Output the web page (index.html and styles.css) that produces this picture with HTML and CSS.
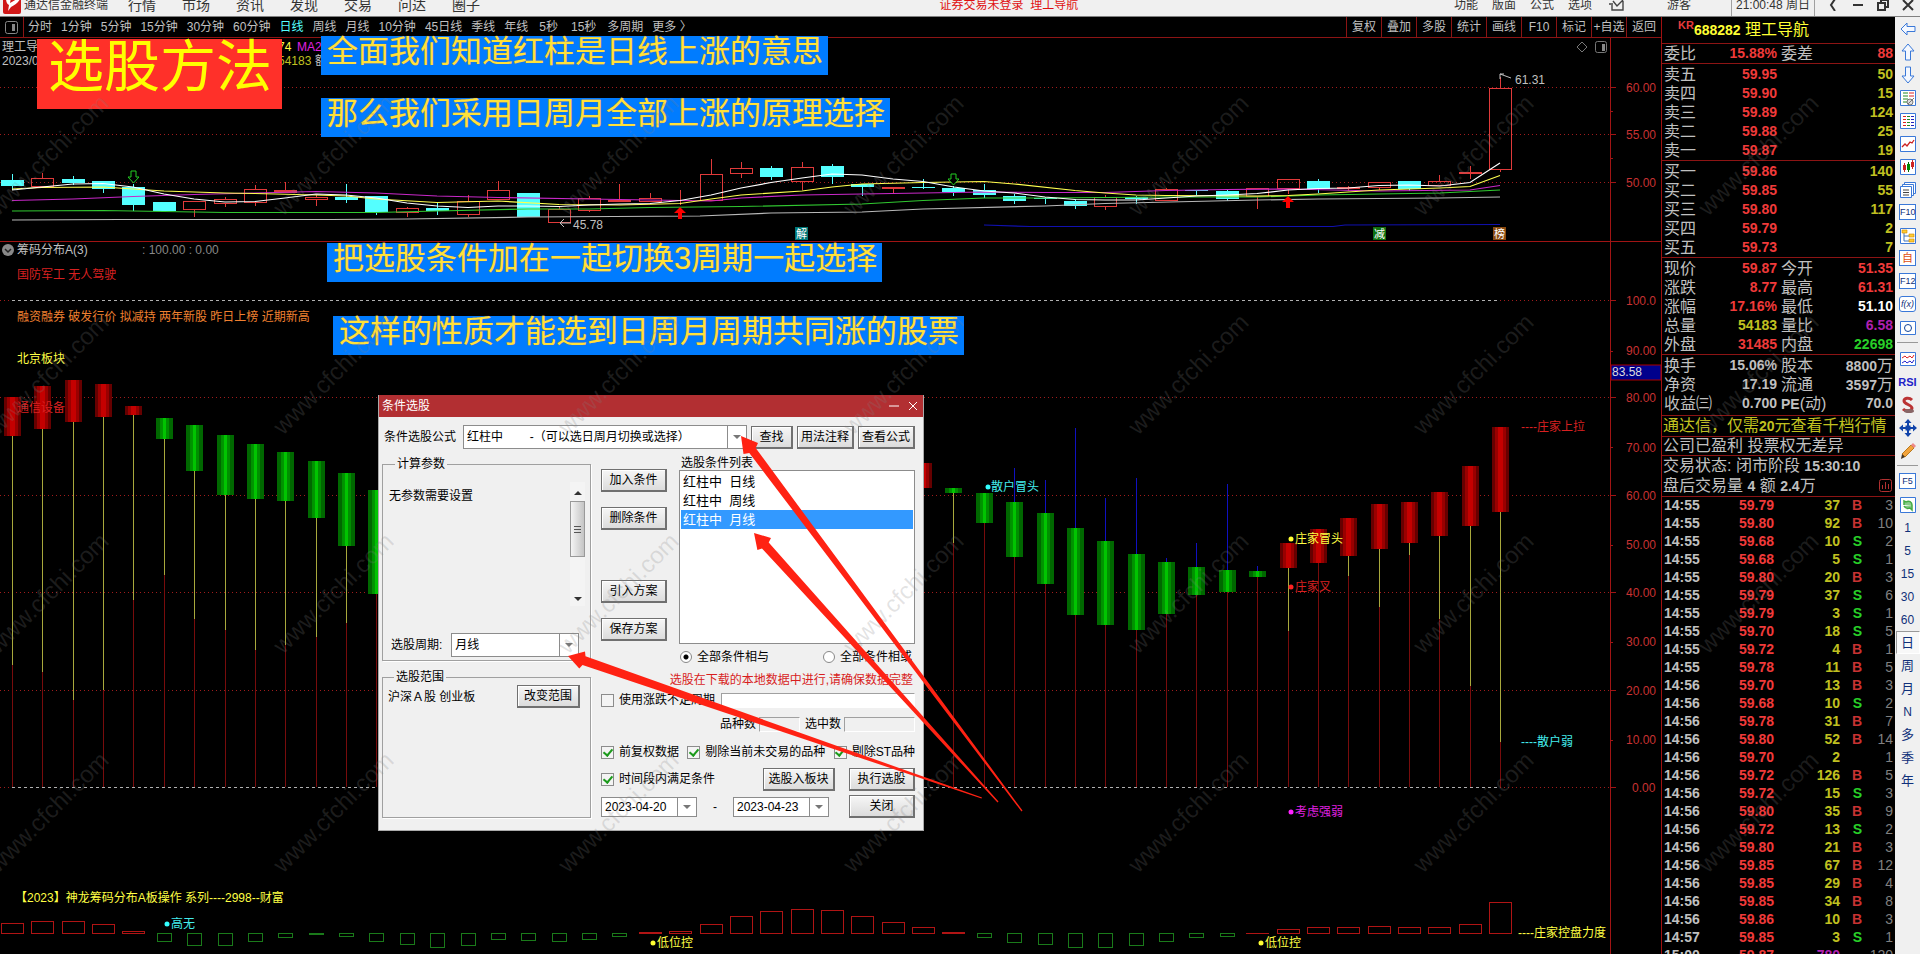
FILE: index.html
```html
<!DOCTYPE html>
<html lang="zh-CN">
<head>
<meta charset="utf-8">
<title>通达信金融终端</title>
<link rel="stylesheet" href="styles.css">
</head>
<body>
<header class="titlebar">
  <svg class="logo" width="18" height="18" viewBox="0 0 18 18"><rect width="18" height="18" rx="2" fill="#d01818"/><path d="M3 2h5l-1 5 7-4h3c-2 4-5 6-9 8l-3 4 1-6C4 8 3 6 3 2z" fill="#fff"/></svg>
  <span class="app-name">通达信金融终端</span>
  <nav class="menu"><a href="#">行情</a><a href="#">市场</a><a href="#">资讯</a><a href="#">发现</a><a href="#">交易</a><a href="#">问达</a><a href="#">圈子</a></nav>
  <p class="login">证券交易未登录&nbsp; 理工导航</p>
  <nav class="submenu"><a href="#">功能</a><a href="#">版面</a><a href="#">公式</a><a href="#">选项</a></nav>
  <svg class="mail" width="16" height="12" viewBox="0 0 16 12" fill="none" stroke="#444" stroke-width="1.4"><path d="M3 6v5h11V2M0 5h4M4 2l4 5 6-6"/></svg>
  <span class="guest">游客</span>
  <span class="clock">21:00:48 周日</span>
  <div class="winctl">
    <button aria-label="后退"><svg width="12" height="12" viewBox="0 0 12 12"><path d="M8 0 4 6l4 6"/></svg></button>
    <button aria-label="最小化"><svg width="12" height="12" viewBox="0 0 12 12"><path d="M1 6h10"/></svg></button>
    <button aria-label="还原"><svg width="12" height="12" viewBox="0 0 12 12"><path d="M4 3V1h7v7H9M1 4h7v7H1z"/></svg></button>
    <button aria-label="关闭"><svg width="12" height="12" viewBox="0 0 12 12"><path d="m1 1 10 10M11 1 1 11"/></svg></button>
  </div>
</header>

<div class="main">
  <main class="workspace">
    <div class="toolbar">
      <button class="pane" aria-label="面板"><svg width="13" height="13" viewBox="0 0 13 13"><rect x=".5" y=".5" width="12" height="12" rx="2" fill="none" stroke="#888"/><path d="M7 3h3v7H7z" fill="#888"/></svg></button>
      <div class="periods"><button>分时</button><button>1分钟</button><button>5分钟</button><button>15分钟</button><button>30分钟</button><button>60分钟</button><button class="active">日线</button><button>周线</button><button>月线</button><button>10分钟</button><button>45日线</button><button>季线</button><button>年线</button><button class="sec">5秒</button><button class="sec">15秒</button><button>多周期</button><button>更多 〉</button></div>
      <div class="actions"><button>复权</button><button>叠加</button><button>多股</button><button>统计</button><button>画线</button><button>F10</button><button>标记</button><button>+自选</button><button>返回</button></div>
    </div>

    <div class="stage">
      <svg class="chart" viewBox="0 38 1661 916" preserveAspectRatio="xMinYMin meet">
        <defs>
          <linearGradient id="up">
            <stop offset="0" stop-color="#600"/><stop offset=".18" stop-color="#600"/><stop offset=".18" stop-color="#900"/><stop offset=".36" stop-color="#900"/><stop offset=".36" stop-color="#c40000"/><stop offset=".64" stop-color="#c40000"/><stop offset=".64" stop-color="#900"/><stop offset=".82" stop-color="#900"/><stop offset=".82" stop-color="#600"/><stop offset="1" stop-color="#600"/>
          </linearGradient>
          <linearGradient id="down">
            <stop offset="0" stop-color="#006800"/><stop offset=".22" stop-color="#006800"/><stop offset=".22" stop-color="#008e00"/><stop offset=".4" stop-color="#009600"/><stop offset=".4" stop-color="#00c400"/><stop offset=".6" stop-color="#00c400"/><stop offset=".6" stop-color="#008e00"/><stop offset=".78" stop-color="#008e00"/><stop offset=".78" stop-color="#006800"/><stop offset="1" stop-color="#006800"/>
          </linearGradient>
        </defs>
        <g id="grid" class="crisp"></g>
        <g id="candles" class="crisp"></g>
        <g id="averages" class="avg"></g>
        <g id="bars" class="crisp"></g>
        <g id="control" class="crisp"></g>

        <g class="down-mark"><path d="M131 171h5v6h3l-5.500 6-5.500-6h3z"/><path d="M951 174h5v5h3l-5.500 6-5.500-6h3z"/></g>
        <g fill="#f00"><path d="M680 207l6 6h-4v6h-4v-6h-4z"/><path d="M1288 196l6 6h-4v6h-4v-6h-4z"/></g>
        <g class="badge">
          <rect x="795" y="227" width="13" height="13" fill="#007878"/><text x="796" y="238">解</text>
          <rect x="1373" y="227" width="13" height="13" fill="#107010"/><text x="1374" y="238">减</text>
          <rect x="1493" y="227" width="13" height="13" fill="#8a4a10"/><text x="1494" y="238">榜</text>
        </g>
        <path d="M571 223h-11m4-4-4 4 4 4M1500 79v-5h4m-4 0 11 4" fill="none" stroke="#c0c0c0"/>
        <g fill="none" stroke="#777"><path d="m1582 42 5 5-5 5-5-5z"/><rect x="1595.500" y="41.500" width="11" height="11" rx="2"/></g>
        <path d="M1602 44h3v7h-3z" fill="#888"/>
        <circle cx="8" cy="250" r="6" fill="#888"/><path d="m5 249 3 3 3-3" fill="none" stroke="#222" stroke-width="1.500"/>
        <rect x="1611" y="365" width="50" height="15" fill="#00008c" stroke="#a00"/>

        <g class="t grey">
          <text x="2" y="51">理工导航</text><text x="2" y="65">2023/04</text>
          <text x="315" y="65">额</text><text x="573" y="229">45.78</text><text x="1515" y="84">61.31</text>
          <text x="17" y="254">筹码分布A(3)</text>
        </g>
        <g class="t dim"><text x="142" y="254">: 100.00 : 0.00</text></g>
        <g class="t yellow">
          <text x="278" y="51">74</text><text x="17" y="363">北京板块</text><text x="1295" y="543">庄家冒头</text>
          <text x="15" y="902">【2023】神龙筹码分布A板操作 系列----2998--财富</text>
          <text x="657" y="947">低位控</text><text x="1265" y="947">低位控</text><text x="1518" y="937">----庄家控盘力度</text>
        </g>
        <g class="t olive"><text x="278" y="65">54183</text></g>
        <g class="t magenta"><text x="297" y="51">MA20</text><text x="1295" y="816">考虑强弱</text></g>
        <g class="t red"><text x="17" y="279">国防军工 无人驾驶</text><text x="17" y="412">通信设备</text><text x="1295" y="591">庄家叉</text><text x="1521" y="431">----庄家上拉</text></g>
        <g class="t orange"><text x="17" y="321">融资融券 破发行价 拟减持 两年新股 昨日上榜 近期新高</text></g>
        <g class="t cyan"><text x="991" y="491">散户冒头</text><text x="171" y="928">高无</text><text x="1521" y="746">----散户弱</text></g>
        <g><circle cx="988" cy="487" r="2.500" fill="#3ff"/><circle cx="167" cy="924" r="2.500" fill="#3ff"/><circle cx="1291" cy="539" r="2.500" fill="#ff3"/><circle cx="1291" cy="587" r="2.500" fill="#f22"/><circle cx="1291" cy="812" r="2.500" fill="#f2f"/><circle cx="653" cy="943" r="2.500" fill="#ff3"/><circle cx="1261" cy="943" r="2.500" fill="#ff3"/></g>
        <g class="t axis">
          <text x="1626" y="92">60.00</text><text x="1626" y="139">55.00</text><text x="1626" y="187">50.00</text>
          <text x="1626" y="305">100.0</text><text x="1626" y="355">90.00</text><text x="1626" y="402">80.00</text><text x="1626" y="452">70.00</text><text x="1626" y="500">60.00</text><text x="1626" y="549">50.00</text><text x="1626" y="597">40.00</text><text x="1626" y="646">30.00</text><text x="1626" y="695">20.00</text><text x="1626" y="744">10.00</text><text x="1632" y="792">0.00</text>
        </g>
        <g class="t white"><text x="1612" y="376">83.58</text></g>
      </svg>

      <h1 class="note headline">选股方法</h1>
      <p class="note n1">全面我们知道红柱是日线上涨的意思</p>
      <p class="note n2">那么我们采用日周月全部上涨的原理选择</p>
      <p class="note n3">把选股条件加在一起切换3周期一起选择</p>
      <p class="note n4">这样的性质才能选到日周月周期共同涨的股票</p>

      <section class="dialog" role="dialog" aria-labelledby="dlg-title">
        <div class="dlg-title"><h2 id="dlg-title">条件选股</h2>
          <button aria-label="最小化"><svg width="10" height="10"><path d="M0 5h10"/></svg></button>
          <button aria-label="关闭"><svg width="10" height="10"><path d="m1 1 8 8M9 1 1 9"/></svg></button>
        </div>
        <form class="dlg-body">
          <div class="row formula">
            <label for="formula">条件选股公式</label>
            <span class="drop grow"><select id="formula"><option>红柱中 &nbsp; &nbsp; &nbsp; &nbsp;-（可以选日周月切换或选择）</option></select></span>
            <button type="button" class="btn b-s">查找</button><button type="button" class="btn b-m">用法注释</button><button type="button" class="btn b-m">查看公式</button>
          </div>
          <div class="cols">
            <div class="left">
              <fieldset class="params"><legend>计算参数</legend>
                <div class="param-box"><p>无参数需要设置</p>
                  <div class="scroll"><i class="tri upward"></i><i class="thumb"></i><i class="tri"></i></div>
                </div>
                <div class="row cycle"><label for="cycle">选股周期:</label><span class="drop w-cycle"><select id="cycle"><option>月线</option></select></span></div>
              </fieldset>
              <fieldset class="scope"><legend>选股范围</legend>
                <div class="row between"><span>沪深Ａ股 创业板</span><button type="button" class="btn b-r">改变范围</button></div>
              </fieldset>
            </div>
            <div class="right">
              <div class="pick">
                <div class="stack"><button type="button" class="btn">加入条件</button><button type="button" class="btn">删除条件</button><button type="button" class="btn apart">引入方案</button><button type="button" class="btn">保存方案</button></div>
                <div class="listcol">
                  <span id="list-label">选股条件列表</span>
                  <ul role="listbox" aria-labelledby="list-label"><li role="option">红柱中&nbsp; 日线</li><li role="option">红柱中&nbsp; 周线</li><li role="option" aria-selected="true">红柱中&nbsp; 月线</li></ul>
                </div>
              </div>
              <div class="row radios"><label><input type="radio" name="join" checked>全部条件相与</label><label><input type="radio" name="join">全部条件相或</label></div>
              <p class="warn">选股在下载的本地数据中进行,请确保数据完整</p>
              <div class="row var"><label><input type="checkbox">使用涨跌不定周期</label><input class="field grow" type="text" aria-label="不定周期"></div>
              <div class="row counts"><label for="total">品种数</label><input class="field flat total" id="total" type="text" readonly><label class="hits-label" for="hits">选中数</label><input class="field flat hits" id="hits" type="text" readonly></div>
              <div class="row between checks"><label><input type="checkbox" checked>前复权数据</label><label><input type="checkbox" checked>剔除当前未交易的品种</label><label><input type="checkbox" checked>剔除ST品种</label></div>
              <div class="row span"><label><input type="checkbox" checked>时间段内满足条件</label><button type="button" class="btn b-l">选股入板块</button><button type="button" class="btn b-x">执行选股</button></div>
              <div class="row dates"><span class="drop date"><select aria-label="开始日期"><option>2023-04-20</option></select></span><span class="dash">-</span><span class="drop date"><select aria-label="结束日期"><option>2023-04-23</option></select></span><button type="button" class="btn b-x">关闭</button></div>
            </div>
          </div>
        </form>
      </section>
    </div>
  </main>

  <aside class="quote">
    <h2 class="q-head"><sup>KR</sup><b>688282</b> 理工导航</h2>
    <div class="grp four tight"><span>委比</span><b class="r">15.88%</b><span>委差</span><b class="r">88</b></div>
    <div class="grp three">
      <span>卖五</span><b class="r">59.95</b><b class="y">50</b>
      <span>卖四</span><b class="r">59.90</b><b class="y">15</b>
      <span>卖三</span><b class="r">59.89</b><b class="y">124</b>
      <span>卖二</span><b class="r">59.88</b><b class="y">25</b>
      <span>卖一</span><b class="r">59.87</b><b class="y">19</b>
    </div>
    <div class="grp three">
      <span>买一</span><b class="r">59.86</b><b class="y">140</b>
      <span>买二</span><b class="r">59.85</b><b class="y">55</b>
      <span>买三</span><b class="r">59.80</b><b class="y">117</b>
      <span>买四</span><b class="r">59.79</b><b class="y">2</b>
      <span>买五</span><b class="r">59.73</b><b class="y">7</b>
    </div>
    <div class="grp four">
      <span>现价</span><b class="r">59.87</b><span>今开</span><b class="r">51.35</b>
      <span>涨跌</span><b class="r">8.77</b><span>最高</span><b class="r">61.31</b>
      <span>涨幅</span><b class="r">17.16%</b><span>最低</span><b class="w">51.10</b>
      <span>总量</span><b class="y">54183</b><span>量比</span><b class="m">6.58</b>
      <span>外盘</span><b class="r">31485</b><span>内盘</span><b class="g">22698</b>
    </div>
    <div class="grp four loose">
      <span>换手</span><b>15.06%</b><span>股本</span><b>8800<i>万</i></b>
      <span>净资</span><b>17.19</b><span>流通</span><b>3597<i>万</i></b>
      <span>收益㈢</span><b>0.700</b><span><b>PE</b>(动)</span><b>70.0</b>
    </div>
    <p class="line promo">通达信，仅需<b>20</b>元查看千档行情</p>
    <p class="line">公司已盈利 投票权无差异</p>
    <div class="line state"><p>交易状态: 闭市阶段 <b>15:30:10</b></p><p>盘后交易量 <b>4</b> 额 <b>2.4</b>万</p>
      <svg width="13" height="13" viewBox="0 0 13 13" fill="none" stroke="#b03030"><rect x=".5" y=".5" width="12" height="12" rx="2"/><path d="M3.500 10V6M6.500 10V3M9.500 10V5"/></svg></div>
    <table class="ticks"><tbody id="ticks"></tbody></table>
  </aside>

  <nav class="tools" aria-label="工具">
    <button aria-label="后退"><svg viewBox="0 0 18 18"><path class="ar" d="M2 9l6-6v3.500h8v5H8V15z"/></svg></button>
    <button aria-label="上移"><svg viewBox="0 0 18 18"><path class="ar" d="M9 1l6 7h-3.500v9h-5V8H3z"/></svg></button>
    <button aria-label="下移"><svg viewBox="0 0 18 18"><path class="ar" d="M9 17l6-7h-3.500V1h-5v9H3z"/></svg></button>
    <button aria-label="报价"><svg viewBox="0 0 18 18"><path class="bx" d="M1.500 1.500h15v15h-15z"/><path d="M4 4h5M4 7h5M4 10h5M4 13h4" stroke="#282"/><path d="M10 4h5M10 7h5" stroke="#d22"/><circle cx="11" cy="13" r="3" fill="#ddd" stroke="#777"/><path d="m9 15 6-6" stroke="#777"/></svg></button>
    <button aria-label="列表"><svg viewBox="0 0 18 18"><path class="bx" d="M1.500 1.500h15v15h-15z"/><path d="M4 4.500h3M4 7.500h3M4 10.500h3M4 13.500h3" stroke="#d22"/><path d="M8 4.500h3M8 7.500h3M8 10.500h3M8 13.500h3" stroke="#282"/><path d="M12 4.500h3M12 7.500h3M12 10.500h3M12 13.500h3" stroke="#22b"/></svg></button>
    <button aria-label="走势"><svg viewBox="0 0 18 18"><path class="bx" d="M1.500 1.500h15v15h-15z"/><path d="m3 12 3-3 2 2 3-4 2 1 2-3" stroke="#c22" fill="none" stroke-width="1.300"/></svg></button>
    <button aria-label="K线"><svg viewBox="0 0 18 18"><path class="bx" d="M1.500 1.500h15v15h-15z"/><path d="M5.500 5v9M13.500 2v9" stroke="#c22"/><path d="M4 7h3v5H4zM12 4h3v5h-3z" fill="#c22"/><path d="M9.500 4v10" stroke="#060"/><path d="M8 6h3v6H8z" fill="#080"/></svg></button>
    <button aria-label="多窗"><svg viewBox="0 0 18 18"><path class="bx" d="M5.500 1.500h11v11h-11z"/><path class="bx" d="M3.500 3.500h11v11h-11z"/><path class="bx" d="M1.500 5.500h11v11h-11z"/><path d="M4 9h6M4 11.500h6M4 14h6" stroke="#444"/></svg></button>
    <button class="key">F10</button>
    <button aria-label="结构"><svg viewBox="0 0 18 18"><path class="bx" d="M1.500 1.500h15v15h-15z"/><path d="M5 5v9h6M5 9h6" stroke="#47b" fill="none"/><path d="M3 3h5v3H3zM10 7h5v3h-5zM10 12h5v3h-5z" fill="#fc3" stroke="#c80" stroke-width=".6"/></svg></button>
    <button class="key self">自</button>
    <button class="key">F12</button>
    <button class="key fx">f(x)</button>
    <button aria-label="圆"><svg viewBox="0 0 18 18"><path class="bx" d="M1.500 2.500h15v13h-15z"/><circle cx="9" cy="9" r="3.500" fill="none" stroke="#149"/></svg></button>
    <hr>
    <button aria-label="波动"><svg viewBox="0 0 18 18"><path class="bx" d="M1.500 2.500h15v13h-15z"/><path d="m3 8 3-2 2 2 3-2 2 2 2-3" stroke="#d22" fill="none"/><path d="m3 13 3-2 2 2 3-2 2 2 2-3" stroke="#22c" fill="none"/></svg></button>
    <button class="rsi">RSI</button>
    <button aria-label="资金"><svg viewBox="0 0 18 18"><path d="M13 4C10 1 5 2 5 5s8 4 8 7-6 4-9 1" fill="none" stroke="#b33" stroke-width="3"/><ellipse cx="10" cy="15" rx="5" ry="2" fill="#866"/></svg></button>
    <button aria-label="移动"><svg viewBox="0 0 18 18"><path d="M9 0l3.500 4h-7zM9 18l3.500-4h-7zM0 9l4-3.500v7zM18 9l-4-3.500v7zM8 4h2v10H8zM4 8h10v2H4z" fill="#14a"/><path d="M6.500 6.500h5v5h-5z" fill="#14a"/></svg></button>
    <button aria-label="画笔"><svg viewBox="0 0 18 18"><path d="M3 12 12 3l3 3-9 9z" fill="#f2a33c" stroke="#a60" stroke-width=".8"/><path d="m12 3 2-2 3 3-2 2z" fill="#e88"/><path d="m3 12-1 5 4-2z" fill="#432"/></svg></button>
    <hr>
    <button class="key">F5</button>
    <button aria-label="刷新"><svg viewBox="0 0 18 18"><path class="bx" d="M1.500 1.500h15v15h-15z"/><path d="M5 9V5l2 1c3-2 6 0 6 3M13 9v5l-2-2c-3 1-5 0-6-2" fill="#8c8" stroke="#4a4" stroke-width="1.500"/></svg></button>
    <button>1</button><button>5</button><button>15</button><button>30</button><button>60</button>
    <button class="pressed">日</button><button class="zh">周</button><button class="zh">月</button><button>N</button><button class="zh">多</button><button class="zh">季</button><button class="zh">年</button>
  </nav>
</div>

<svg class="overlay" aria-hidden="true">
  <g id="marks" class="mark"></g>
  <g fill="#ff2213">
    <path d="M741 436 758 443 755.700 448 1022.500 810.500 1021.500 811.500 749.300 453 743.500 454z"/>
    <path d="M754 533 771 538 768.700 542.600 998.500 801.500 997.500 802.500 762 548.600 757.400 550z"/>
    <path d="M568 656 585 651.500 585.500 656.300 982 797.500 981.500 798.500 582.500 665 579.300 668.500z"/>
  </g>
</svg>
<script src="app.js"></script>
</body>
</html>
```

FILE: styles.css
```css
* { box-sizing: border-box; }
body {
  margin: 0;
  height: 100vh;
  display: flex;
  flex-direction: column;
  overflow: hidden;
  background: #000;
  color: #c0c0c0;
  font: 12px/16px "Liberation Sans", "Noto Sans CJK SC", sans-serif;
}
h1, h2, p, ul, fieldset, legend { margin: 0; padding: 0; font-weight: 400; }
button { font: inherit; color: inherit; background: none; border: 0; padding: 0; margin: 0; white-space: nowrap; }
a { color: inherit; text-decoration: none; }
i { font-style: normal; }

/* title bar */
.titlebar {
  flex: none;
  height: 17px;
  padding: 0 6px 6px 3px;
  display: flex;
  align-items: center;
  background: #f0f0f0;
  border-bottom: 1px solid #808080;
  color: #333;
  overflow: hidden;
}
.titlebar > * { flex: none; }
.logo { margin-right: 3px; }
.menu { display: flex; gap: 26px; margin-left: 20px; font-size: 14px; }
.titlebar .login { flex: 1 1 0; text-align: center; color: #e01010; padding-left: 84px; }
.submenu { display: flex; gap: 14px; }
.mail { margin-left: 17px; }
.guest { margin-left: 42px; }
.clock { margin-left: 40px; padding: 0 4px; border: solid #a0a0a0; border-width: 0 1px; line-height: 28px; }
.winctl { display: flex; gap: 13px; margin-left: 12px; }
.winctl button { display: flex; }
.winctl svg { fill: none; stroke: #333; stroke-width: 2; }

.main { flex: 1; min-height: 0; display: flex; }
.workspace { flex: 1; min-width: 0; display: flex; flex-direction: column; }

/* toolbar */
.toolbar { flex: none; height: 21px; display: flex; border-bottom: 1px solid #8c1414; }
.pane { width: 24px; display: grid; place-items: center; border-right: 1px solid #8c1414; }
.periods { flex: 1; display: flex; gap: 9px; padding-left: 4px; }
.periods .active { color: #5ff; }
.periods .sec { margin: 0 2px; }
.actions { display: flex; }
.actions button { width: 35px; border-left: 1px solid #8c1414; }

/* chart */
.stage { flex: 1; min-height: 0; position: relative; }
.chart { display: block; width: 100%; height: 100%; }
.crisp { shape-rendering: crispEdges; }
.avg { fill: none; stroke-width: 1.2; }
.t { font-size: 12px; white-space: pre; }
.grey { fill: #c0c0c0; }
.dim { fill: #888; }
.yellow { fill: #ff4; }
.olive { fill: #c0c020; }
.magenta { fill: #e020e0; }
.red { fill: #d82020; }
.orange { fill: #f08030; }
.cyan { fill: #4ee; }
.axis { fill: #c83232; }
.white { fill: #ddd; }
.badge { fill: #fff; font-size: 11px; }
.down-mark { fill: #000; stroke: #2c2; stroke-width: 1; }

/* notes pinned over the chart */
.note {
  position: absolute;
  padding: 0 5px 7px 6px;
  background: #007cff;
  color: #ffe23a;
  font-size: 31px;
  line-height: 32px;
  white-space: nowrap;
  text-shadow: 0 0 1px #a06060;
}
.headline { left: 37px; top: 1px; padding: 0 10px 14px 11px; background: #ff3029; color: #ff0; font-size: 56px; line-height: 56px; text-shadow: none; }
.n1 { left: 321px; top: -2px; }
.n2 { left: 321px; top: 60px; }
.n3 { left: 327px; top: 205px; }
.n4 { left: 333px; top: 278px; }

/* dialog */
.dialog { position: absolute; left: 378px; top: 357px; width: 546px; background: #f0f0f0; border: 1px solid #aaa; border-top: 0; color: #000; }
.dlg-title { height: 22px; display: flex; align-items: center; gap: 9px; padding: 0 5px 0 3px; background: #b22f32; color: #fff; }
.dlg-title h2 { flex: 1; font-size: 12px; }
.dlg-title button { display: flex; }
.dlg-title svg { fill: none; stroke: #fff; }
.dlg-body { padding: 8px 8px 10px 3px; }
.row { display: flex; align-items: center; }
.between { justify-content: space-between; }
.grow { flex: 1; min-width: 0; }
.formula { gap: 4px; padding-left: 2px; height: 24px; }
.formula label { margin-right: 3px; }
.btn { height: 23px; width: 66px; border: 2px solid #707070; border-width: 1px 2px 2px 1px; box-shadow: inset 1px 1px #fff; background: linear-gradient(#f6f6f6, #dcdcdc); line-height: 18px; }
.b-s { width: 42px; }
.b-m { width: 57px; }
.b-r { width: 63px; }
.b-l { width: 72px; margin-right: 14px; }
.drop { position: relative; display: flex; height: 24px; border: 1px solid #8c8c8c; background: #fff; }
.drop select { flex: 1; min-width: 0; appearance: none; border: 0; background: none; padding: 0 0 0 3px; font: inherit; color: #000; }
.drop::after { content: ""; width: 18px; border-left: 1px solid #8c8c8c; }
.drop::before { content: ""; position: absolute; right: 5px; top: 50%; margin-top: -2px; border: solid transparent; border-width: 4px 4px 0; border-top-color: #777; }
.cols { display: flex; gap: 10px; margin-top: 7px; }
.left { width: 209px; flex: none; display: flex; flex-direction: column; gap: 8px; }
.left fieldset { border: 1px solid #a0a0a0; box-shadow: 1px 1px #fff; }
.left legend { margin-left: 6px; padding: 0 2px; }
.params { height: 205px; padding: 10px 4px 0 6px; }
.param-box { display: flex; justify-content: space-between; height: 124px; padding-right: 1px; }
.param-box p { padding-top: 6px; }
.scroll { width: 15px; display: flex; flex-direction: column; align-items: center; padding: 9px 0 5px; background: #f4f4f4; }
.tri { border: solid transparent; border-width: 4px 4px 0; border-top-color: #333; }
.upward { border-width: 0 4px 4px; border-bottom-color: #333; }
.thumb { width: 15px; height: 56px; margin: 6px 0 auto; border: 1px solid #999; background: linear-gradient(#555, #555) no-repeat 50% 24px / 7px 1px, linear-gradient(#555, #555) no-repeat 50% 27px / 7px 1px, linear-gradient(#555, #555) no-repeat 50% 30px / 7px 1px, linear-gradient(90deg, #f4f4f4, #c4c4c4); }
.cycle { margin-top: 27px; padding-left: 2px; gap: 9px; }
.w-cycle { width: 128px; }
.scope { height: 149px; padding: 0 10px 0 5px; }
.right { flex: 1; min-width: 0; }
.pick { display: flex; gap: 12px; }
.stack { display: flex; flex-direction: column; gap: 15px; padding-top: 13px; }
.apart { margin-top: 35px; }
.listcol { flex: 1; display: flex; flex-direction: column; line-height: 14px; }
.listcol span { padding-left: 2px; }
.listcol ul { height: 174px; padding: 1px 1px; list-style: none; background: #fff; border: 1px solid #8c8c8c; font-size: 13px; line-height: 19px; }
.listcol li { padding-left: 2px; }
.listcol li[aria-selected] { background: #39f; color: #fff; }
.right input { margin: 0; flex: none; }
.right label { display: flex; align-items: center; white-space: nowrap; }
.radios { height: 26px; padding: 0 3px 0 79px; justify-content: space-between; }
.right [type=radio] { appearance: none; width: 12px; height: 12px; border: 1px solid #888; border-radius: 50%; background: #fff; margin-right: 5px; }
.right [type=radio]:checked { background: radial-gradient(circle, #000 2px, #fff 3px); }
.warn { color: #d81e1e; text-align: right; line-height: 21px; padding-right: 2px; }
.right [type=checkbox] { appearance: none; width: 13px; height: 13px; border: 1px solid #8c8c8c; background: #f4f4f4; margin-right: 5px; display: grid; place-items: center; }
.right [type=checkbox]:checked::before { content: ""; width: 4px; height: 7px; margin-bottom: 2px; border: solid #1c9a1c; border-width: 0 2px 2px 0; transform: rotate(40deg); }
.var { gap: 6px; height: 18px; }
.right .field { height: 15px; border: 1px solid; border-color: #a0a0a0 #fff #fff #a0a0a0; padding: 0 2px; font: inherit; }
.right .field.grow { flex: 1; }
.right .flat { background: #f0f0f0; }
.counts { justify-content: flex-end; gap: 3px; height: 30px; }
.hits-label { margin-left: 2px; }
.total { width: 41px; }
.hits { width: 71px; }
.checks { height: 26px; }
.span { height: 28px; }
.span label { flex: 1; }
.dates { height: 27px; justify-content: space-between; }
.date { width: 96px; height: 20px; }
.dates .b-x { margin-left: 4px; }

/* quote panel */
.quote { flex: none; width: 234px; border-left: 1px solid #a01010; overflow: hidden; font-size: 16px; line-height: 19px; }
.quote b { font-size: 14px; }
.q-head { height: 27px; padding-left: 16px; border-bottom: 1px solid #8c1414; font-size: 16px; line-height: 26px; color: #ff3; }
.q-head sup { font-size: 11px; line-height: 11px; color: #e63c3c; font-weight: 700; vertical-align: 6px; }
.grp { display: grid; padding: 1px 2px 0 2px; border-bottom: 1px solid #8c1414; grid-auto-rows: 19px; white-space: nowrap; }
.grp > b { text-align: right; }
.three { grid-template-columns: 50px 63px 1fr; }
.four { grid-template-columns: 50px 63px 52px 1fr; }
.four > span:nth-child(4n + 3) { padding-left: 4px; }
.tight { padding-top: 0; }
.loose { padding-bottom: 2px; }
.grp i { font-size: 16px; font-weight: 400; }
.r { color: #f03a3a; }
.y { color: #c0c020; }
.w { color: #fff; }
.m { color: #b020b0; }
.g { color: #28d028; }
.line { padding-left: 1px; border-bottom: 1px solid #8c1414; line-height: 18px; white-space: nowrap; }
.promo { color: #c0c020; line-height: 20px; }
.state { position: relative; line-height: 19px; }
.state svg { position: absolute; right: 3px; bottom: 4px; }
.ticks { width: 100%; border-collapse: collapse; table-layout: fixed; font-size: 14px; font-weight: 700; line-height: 17px; }
.ticks td { padding: 0 0 1px; text-align: right; }
.ticks td:nth-child(1) { width: 52px; text-align: left; padding-left: 2px; }
.ticks td:nth-child(2) { width: 60px; color: #f03a3a; }
.ticks td:nth-child(3) { width: 66px; color: #c0c020; }
.ticks td:nth-child(4) { width: 22px; color: #c83232; }
.ticks td:nth-child(5) { color: #808080; font-weight: 400; padding-right: 2px; }
.ticks td.sell { color: #28d028; }
.ticks td.big { color: #b020b0; }

/* side tools */
.tools { flex: none; width: 25px; background: #f0f0f0; color: #10307a; display: flex; flex-direction: column; align-items: center; overflow: hidden; }
.tools button { flex: none; width: 24px; height: 23px; display: grid; place-items: center; }
.tools svg { width: 18px; height: 18px; fill: none; }
.tools .ar { fill: #f4f8ff; stroke: #3a78d8; }
.tools .bx { fill: #fff; stroke: #3a78d8; }
.tools hr { flex: none; width: 21px; height: 1px; margin: 3px 0 4px; border: 0; background: #999; }
.tools .key { width: 17px; height: 16px; margin: 3px 0 4px; border: 1px solid #3a78d8; background: #fff; font-size: 9px; line-height: 14px; }
.tools .self { color: #e05010; font-size: 11px; }
.tools .fx { font-style: italic; border-radius: 3px; }
.tools .rsi { font-weight: 700; font-size: 11px; color: #2222c8; }
.tools .zh { font-size: 13px; }
.tools .pressed { font-size: 13px; border: 1px solid #999; border-right-color: #fff; border-bottom-color: #fff; background: #f8f8f8; }

.overlay { position: absolute; inset: 0; width: 100%; height: 100%; pointer-events: none; }
.mark { font-size: 24px; fill: #808080; fill-opacity: .22; }
```

FILE: app.js
```javascript
const NS = 'http://www.w3.org/2000/svg';
const byId = id => document.getElementById(id);
function add(parent, tag, attrs, text) {
  const el = document.createElementNS(NS, tag);
  for (const k in attrs) el.setAttribute(k, attrs[k]);
  if (text) el.textContent = text;
  parent.appendChild(el);
}
const line = (p, x1, y1, x2, y2, stroke, dash) =>
  add(p, 'line', { x1, y1, x2, y2, stroke, 'stroke-dasharray': dash || 'none' });
const cx = i => Math.round(12 + i * 30.37);

/* grid and axes */
const grid = byId('grid');
[87.5, 134.5, 182.5, 300.5, 397.5, 495.5, 592.5, 690.5, 787.5].forEach(y => {
  line(grid, 0, y, 1610, y, '#a01c1c', '1 3');
  line(grid, 1610, y, 1616, y, '#a01414');
});
[111.5, 158.5, 351.5, 447.5, 545.5, 642.5, 740.5].forEach(y => line(grid, 1610, y, 1613, y, '#a01414'));
line(grid, 0, 241.5, 1661, 241.5, '#a01414');
line(grid, 1610.5, 38, 1610.5, 954, '#a01414');
[300.5, 787.5].forEach(y => {
  line(grid, 12, y, 1500, y, '#000');
  line(grid, 12, y, 1500, y, '#b0b0b0', '3 3');
});

/* daily candles: kind, high, body top, body bottom, low (thirds of a unit) */
const candles = `c522,540,558,570 r519,535,562,562 c528,537,549,555 c543,543,567,579 c552,561,615,633 c606,606,633,633
r603,603,630,651 r591,598,612,621 r555,567,608,618 f546,570,578,578 r585,591,600,618 c552,591,600,609 c588,588,636,645
r620,625,640,651 c606,624,633,645 r585,604,645,650 r543,571,600,600 c579,579,652,652 r618,627,670,670 r588,595,632,637
r552,600,606,606 r579,595,605,605 f570,601,604,615 r477,523,603,603 r486,505,521,533 c498,504,531,540 r486,502,545,570
c492,498,531,552 c552,553,560,588 f560,561,567,582 c537,561,564,567 c558,563,576,588 c552,570,585,594 c582,588,603,612
c591,593,597,612 c597,603,619,627 r585,591,620,629 c588,590,598,612 r564,568,602,602 c570,570,573,585 c570,573,597,603
r563,565,592,627 r538,538,568,582 c537,543,567,578 r558,560,568,573 r547,547,563,570 c543,543,567,573 r525,544,558,558
f498,517,521,537 r232,265,509,515`.split(/\s+/);
candles.forEach((c, i) => {
  const [hi, top, bot, low] = c.slice(1).split(',').map(v => Math.round(v / 3));
  const cyan = c[0] === 'c', color = cyan ? '#54ffff' : '#e03a3a', x = cx(i) + 0.5, g = byId('candles');
  line(g, x, hi, x, top, color);
  line(g, x, bot, x, low, color);
  if (c[0] === 'r') add(g, 'rect', { x: x - 11, y: top + .5, width: 22, height: Math.max(1, bot - top - 1), fill: 'none', stroke: color });
  else add(g, 'rect', { x: x - 11.5, y: top, width: 23, height: Math.max(1, bot - top), fill: color });
});

/* moving averages */
const averages = {
  '#b8b8b8': '12,220 120,219.500 331,219.500 407,219 528,217 700,216 771,213 862,212 923,209 1045,206 1105,203.500 1257,200 1318,199 1440,198 1500,197',
  '#30c830': '12,211 103,210.500 133,211 225,212.500 376,212.500 437,211 528,209 589,209 650,207.500 741,206.500 862,204 923,200.500 984,198 1045,198 1166,197 1257,197 1318,195 1440,193 1500,190',
  '#c828c8': '12,200.500 73,199 133,196.500 194,194.500 255,193 316,191.500 376,193 437,196 498,197.500 589,199 650,200 711,201 741,198 802,195 862,194 984,192 1045,192.500 1105,192.500 1166,190.500 1227,189.500 1288,189 1379,191 1470,190 1500,185.500',
  '#ffff50': '12,189 42,187.500 103,187 133,189 164,191 225,193 255,193.500 316,195 346,196 376,199 437,202.500 498,201 559,204.500 620,205 680,203.500 711,199 741,195 802,191 832,187 862,184 923,182.500 984,181.500 1014,184 1075,190.500 1105,193 1136,195 1166,195.500 1257,196 1288,195.500 1318,194 1348,192 1379,190 1440,188 1470,186.500 1500,175.500',
  '#ffffff': '12,190 42,187 73,184 103,183.500 133,187 164,194 194,199 225,202 255,201.500 285,198 316,194 346,195 376,198 407,203 437,206 468,207.500 498,206 528,206 559,206.500 589,205 620,204 650,203.500 680,200.500 711,195 741,188 771,182.500 802,178 832,174 862,175 893,179 923,181.500 954,187 984,191 1014,193 1045,197 1075,199.500 1105,200 1136,200 1166,198 1197,196 1227,195 1257,193.500 1288,190 1318,188.500 1348,188 1379,185.500 1409,185 1440,186 1470,182.500 1500,163',
  '#1010b0': '984,225 1030,226.500 1333,226.500 1345,225 1500,224.500'
};
for (const stroke in averages) add(byId('averages'), 'polyline', { points: averages[stroke], stroke });

/* distribution bars: index, kind, top, bottom, end of yellow stem, start of blue stem */
const bars = [
  [0, 'up', 397, 436, 665], [1, 'up', 386, 429, 672], [2, 'up', 380, 422, 700], [3, 'up', 384, 417, 690], [4, 'up', 406, 415, 600],
  [5, 'down', 418, 439, 575], [6, 'down', 425, 471, 619], [7, 'down', 435, 495, 630], [8, 'down', 444, 499, 650],
  [9, 'down', 452, 501, 645], [10, 'down', 461, 518, 637], [11, 'down', 473, 546, 623], [12, 'down', 490, 594],
  [30, 'up', 463, 488], [31, 'down', 488, 493, 543], [32, 'down', 493, 523], [33, 'down', 502, 557, 0, 468],
  [34, 'down', 513, 584, 0, 480], [35, 'down', 528, 615, 0, 428], [36, 'down', 541, 625, 0, 498], [37, 'down', 554, 630, 0, 478],
  [38, 'down', 562, 614, 0, 558], [39, 'down', 567, 595, 0, 543], [40, 'down', 570, 592, 0, 484], [41, 'down', 571, 577, 0, 566],
  [42, 'up', 543, 568, 631], [43, 'up', 529, 563], [44, 'up', 518, 556, 576], [45, 'up', 504, 549, 607], [46, 'up', 502, 543, 555],
  [47, 'up', 492, 536, 619], [48, 'up', 466, 526, 686], [49, 'up', 427, 512, 742]
];
bars.forEach(([i, kind, top, bot, stem, blue]) => {
  const g = byId('bars'), x = cx(i) + 0.5;
  line(g, x, bot, x, 787, '#780c0c');
  if (stem) line(g, x, bot, x, stem, '#a8a83c');
  if (blue) line(g, x, blue, x, top, '#1010c0');
  add(g, 'rect', { x: x - 8.5, y: top, width: 17, height: bot - top, fill: `url(#${kind})` });
});

/* control strength: positive above the base line, negative below */
const strength = [10, 12, 12, 9, 2, -8, -12, -12, -8, -4, -1, -3, -8, -11, -14, -12, -6, -7, -8, -6, -3, 1, 2, 9, 17, 22, 24, 23, 17, 11,
  6, 1, -4, -9, -11, -14, -14, -12, -8, -4, -3, 0, 4, 6, 6, 7, 6, 6, 9, 31];
strength.forEach((v, i) => {
  const half = v < 0 ? 7 : 11, stroke = v < 0 ? '#1a7a1a' : '#b01414';
  add(byId('control'), 'rect', { x: cx(i) + 0.5 - half, y: v < 0 ? 933.5 : 933.5 - v, width: half * 2, height: Math.abs(v) || .1, fill: 'none', stroke });
});

/* trades */
const trades = `14:55 59.79 37 B 3|14:55 59.80 92 B 10|14:55 59.68 10 S 2|14:55 59.68 5 S 1|14:55 59.80 20 B 3|14:55 59.79 37 S 6|14:55 59.79 3 S 1|14:55 59.70 18 S 5|14:55 59.72 4 B 1|14:55 59.78 11 B 5|14:56 59.70 13 B 3|14:56 59.68 10 S 2|14:56 59.78 31 B 7|14:56 59.80 52 B 14|14:56 59.70 2 - 1|14:56 59.72 126 B 5|14:56 59.72 15 S 3|14:56 59.80 35 B 9|14:56 59.72 13 S 2|14:56 59.80 21 B 3|14:56 59.85 67 B 12|14:56 59.85 29 B 4|14:56 59.85 34 B 8|14:56 59.86 10 B 3|14:57 59.85 3 S 1|15:00 59.87 780 - 120`;
trades.split('|').forEach(t => {
  const row = byId('ticks').insertRow();
  t.split(' ').forEach((v, i) => {
    const cell = row.insertCell();
    cell.textContent = v === '-' ? '' : v;
    if (v === 'S') cell.className = 'sell';
    if (i === 2 && +v > 500) cell.className = 'big';
  });
});

/* repeated diagonal mark */
for (let y = 217; y < 1100; y += 219)
  for (let x = -2; x < 1900; x += 285)
    add(byId('marks'), 'text', { transform: `translate(${x} ${y}) rotate(-45)` }, 'www.cfchi.com');
```
